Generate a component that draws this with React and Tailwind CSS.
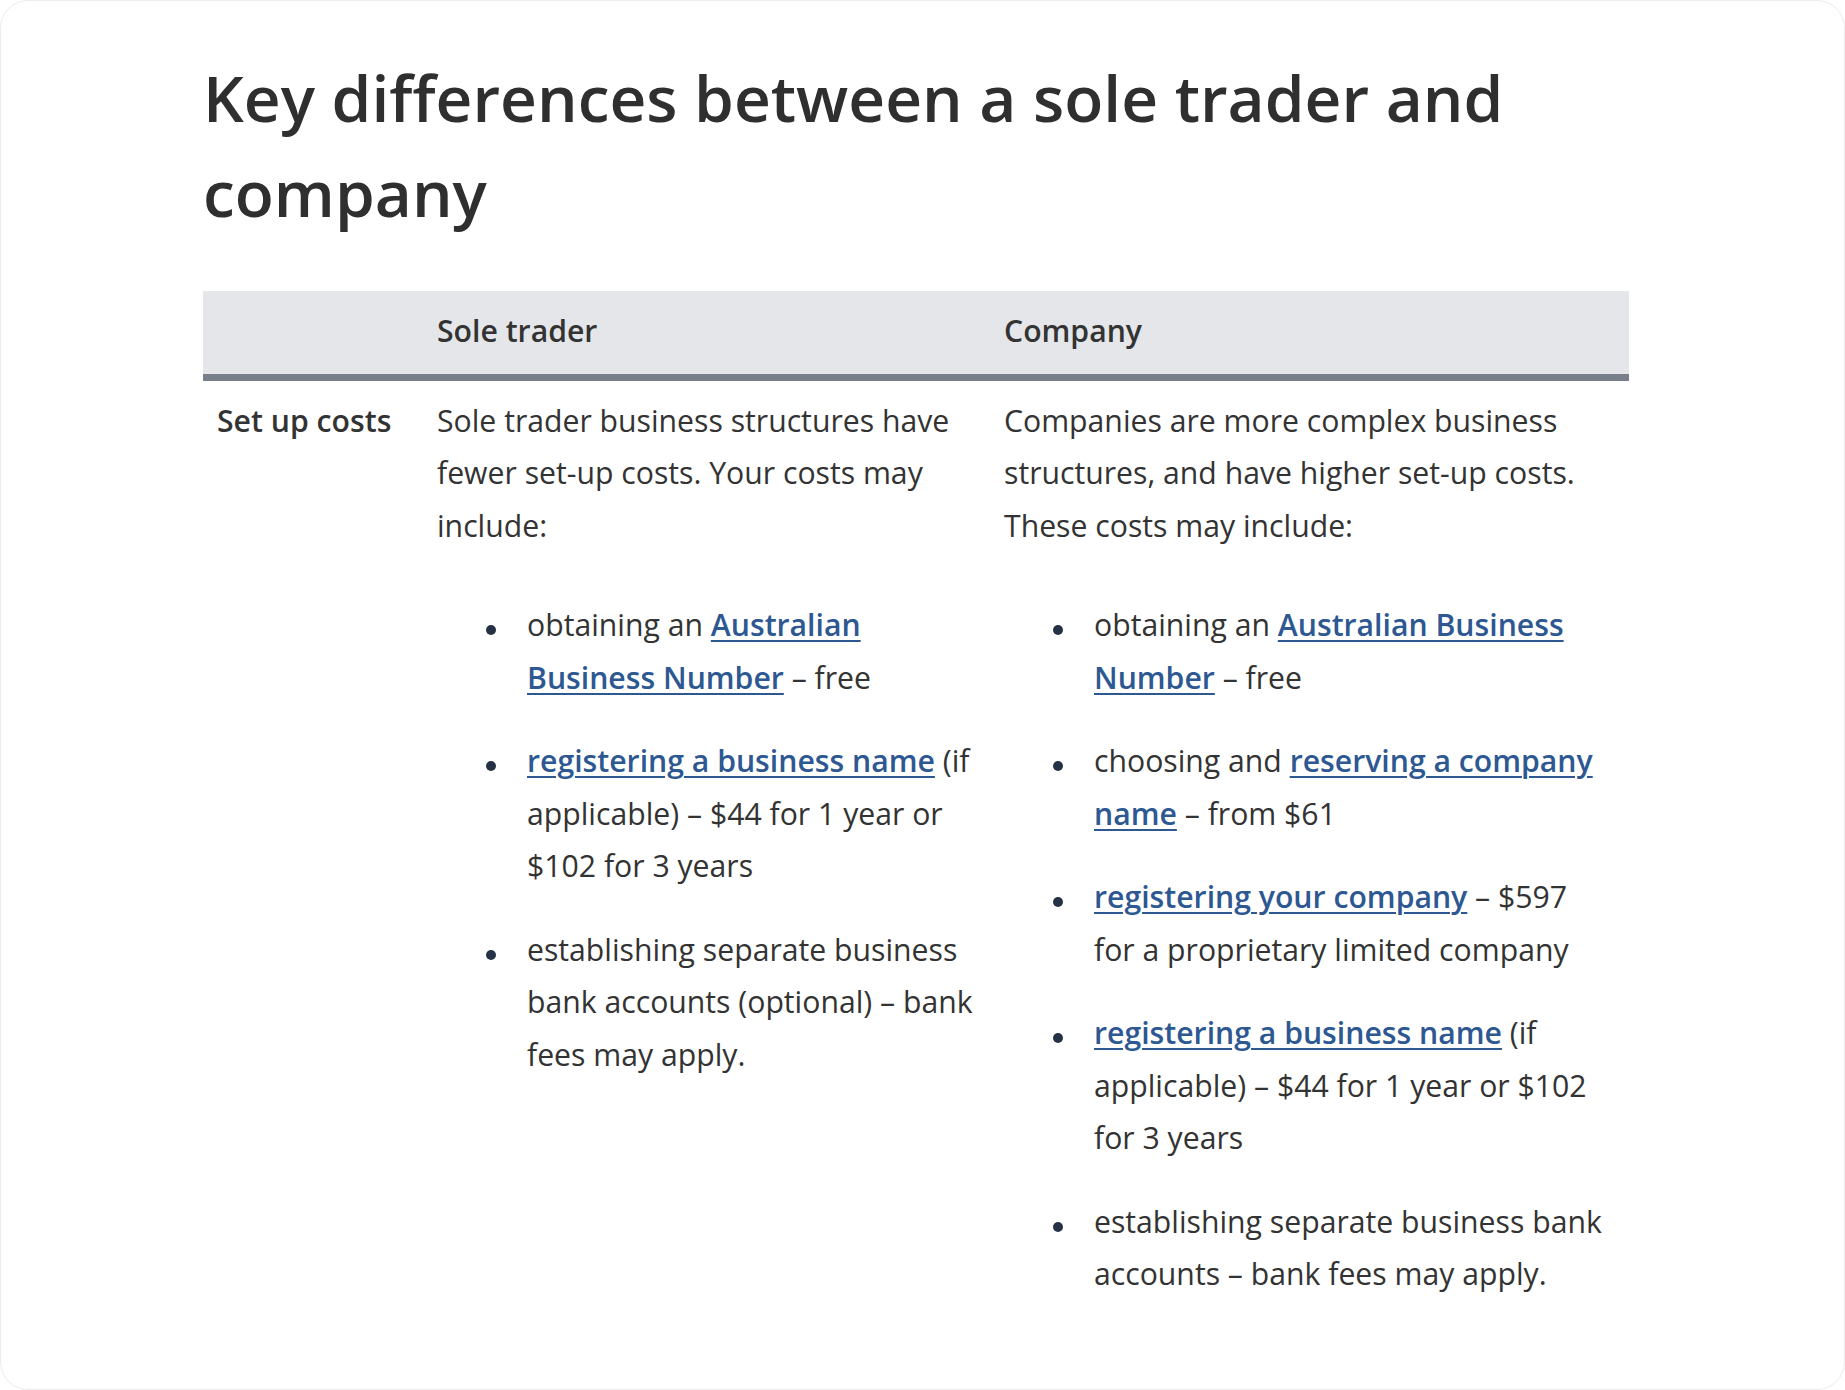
import React from "react";

// Inline link style used in the cost lists
function Link({ children }) {
  return (
    <a
      href="#"
      className="font-semibold text-[#2d5892] underline decoration-[2px] underline-offset-[4px]"
    >
      {children}
    </a>
  );
}

function Bullets({ items }) {
  return (
    <ul className="mt-[47px] pl-[49px] flex flex-col gap-[31px]">
      {items.map((item, i) => (
        <li key={i} className="flex">
          <span className="mt-[26px] w-[10px] h-[10px] rounded-full bg-[#253245] shrink-0" />
          <span className="ml-[31px]">{item}</span>
        </li>
      ))}
    </ul>
  );
}

const SOLE_TRADER = [
  <>
    obtaining an <Link>Australian Business Number</Link> – free
  </>,
  <>
    <Link>registering a business name</Link> (if applicable) – $44 for 1 year
    or $102 for 3 years
  </>,
  <>
    establishing separate business bank accounts (optional) – bank fees may
    apply.
  </>,
];

const COMPANY = [
  <>
    obtaining an <Link>Australian Business Number</Link> – free
  </>,
  <>
    choosing and <Link>reserving a company name</Link> – from $61
  </>,
  <>
    <Link>registering your company</Link> – $597 for a proprietary limited
    company
  </>,
  <>
    <Link>registering a business name</Link> (if applicable) – $44 for 1 year
    or $102 for 3 years
  </>,
  <>establishing separate business bank accounts – bank fees may apply.</>,
];

export default function App() {
  return (
    <div className="w-[1845px] h-[1390px] bg-white font-['Open_Sans',sans-serif] text-[#333333]">
      <div className="h-full rounded-[28px] border border-[#ececec] pl-[202px] pt-[49px]">
        <h2 className="w-[1426px] text-[64px] leading-[95px] font-semibold text-[#2f2f2f]">
          Key differences between a sole trader and company
        </h2>

        <table className="mt-[51px] w-[1426px] table-fixed border-collapse text-[30.2px] leading-[52.5px]">
          <colgroup>
            <col className="w-[220px]" />
            <col className="w-[567px]" />
            <col className="w-[639px]" />
          </colgroup>
          <thead>
            <tr className="bg-[#e4e6e9]">
              <th className="border-b-[7px] border-[#787e8a] px-[14px] pt-[14px] pb-[16px]" />
              <th className="border-b-[7px] border-[#787e8a] px-[14px] pt-[14px] pb-[16px] text-left font-semibold">
                Sole trader
              </th>
              <th className="border-b-[7px] border-[#787e8a] px-[14px] pt-[14px] pb-[16px] text-left font-semibold">
                Company
              </th>
            </tr>
          </thead>
          <tbody>
            <tr>
              <th className="p-[14px] align-top text-left font-semibold">
                Set up costs
              </th>
              <td className="p-[14px] align-top">
                <p>
                  Sole trader business structures have fewer set-up costs. Your
                  costs may include:
                </p>
                <Bullets items={SOLE_TRADER} />
              </td>
              <td className="pl-[14px] pr-[22px] py-[14px] align-top">
                <p>
                  Companies are more complex business structures, and have
                  higher set-up costs. These costs may include:
                </p>
                <Bullets items={COMPANY} />
              </td>
            </tr>
          </tbody>
        </table>
      </div>
    </div>
  );
}
